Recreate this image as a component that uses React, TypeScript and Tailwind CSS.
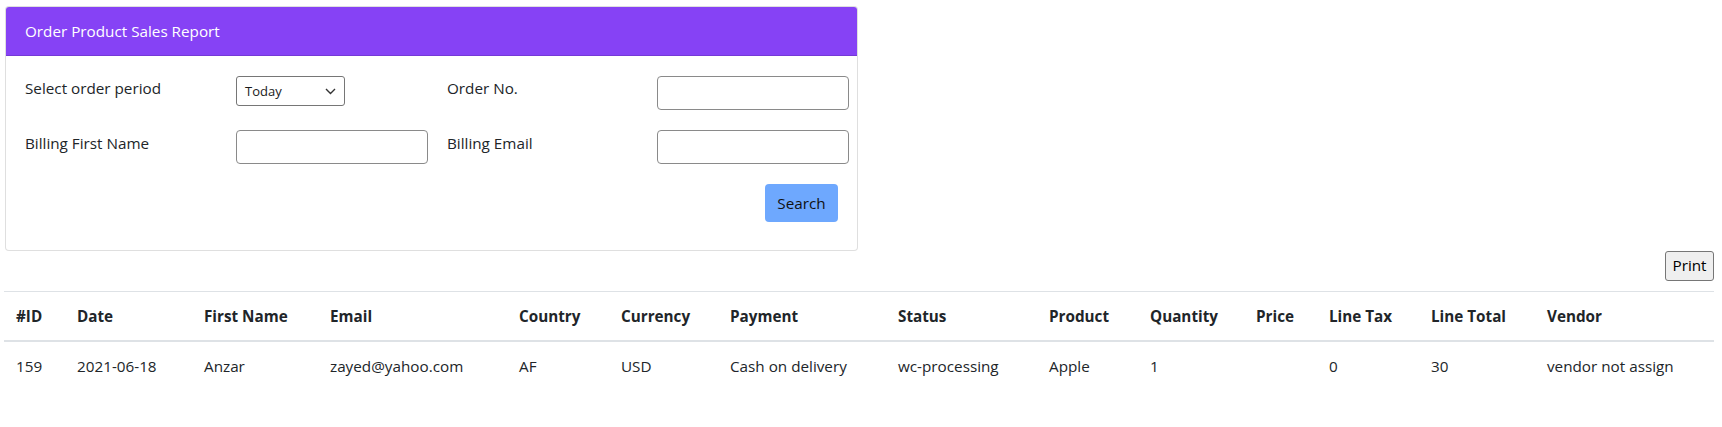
import React from "react";

const headers = [
  "#ID",
  "Date",
  "First Name",
  "Email",
  "Country",
  "Currency",
  "Payment",
  "Status",
  "Product",
  "Quantity",
  "Price",
  "Line Tax",
  "Line Total",
  "Vendor",
];

const row = [
  "159",
  "2021-06-18",
  "Anzar",
  "zayed@yahoo.com",
  "AF",
  "USD",
  "Cash on delivery",
  "wc-processing",
  "Apple",
  "1",
  "",
  "0",
  "30",
  "vendor not assign",
];

export default function App() {
  return (
    <div className="w-[1722px] h-[427px] overflow-hidden bg-white text-[#212529] font-['Open_Sans',sans-serif] text-[15.25px] leading-6">
      <div className="pt-[6px] pl-[5px]">
        <div className="w-[853px] border border-[rgba(0,0,0,0.125)] rounded-[4px] bg-white">
          <div className="h-[49px] bg-[#8642f5] text-white pl-[19px] pr-5 flex items-center rounded-t-[3px] border-b border-[rgba(0,0,0,0.125)]">
            Order Product Sales Report
          </div>
          <div className="pl-[19px] pr-5 pt-5 pb-[28px]">
            <div className="grid grid-cols-[211px_211px_210px_192px] items-start">
              <div>Select order period</div>
              <div className="w-[109px] h-[30px] border border-[#767676] rounded-[3px] flex items-center justify-between pl-[8px] pr-[8px] text-[13px] text-[#1a1a1a]">
                <span>Today</span>
                <svg width="11" height="7" viewBox="0 0 11 7" fill="none">
                  <path d="M1 1l4.5 4.5L10 1" stroke="#333" strokeWidth="1.4" />
                </svg>
              </div>
              <div>Order No.</div>
              <div className="w-[192px] h-[34px] border border-[#8a8a8a] rounded-[4px] bg-white" />
            </div>
            <div className="grid grid-cols-[211px_211px_210px_192px] items-start mt-5">
              <div className="pt-[1px]">Billing First Name</div>
              <div className="w-[192px] h-[34px] border border-[#8a8a8a] rounded-[4px] bg-white" />
              <div className="pt-[1px]">Billing Email</div>
              <div className="w-[192px] h-[34px] border border-[#8a8a8a] rounded-[4px] bg-white" />
            </div>
            <div className="flex justify-end mt-5 -mr-px">
              <button className="w-[73px] h-[38px] bg-[#6ea8fe] rounded-[4px] text-[#111] text-[15.25px]">
                Search
              </button>
            </div>
          </div>
        </div>
      </div>
      <div className="flex justify-end pr-[8px]">
        <button className="w-[49px] h-[30px] bg-[#efefef] border border-[#767676] rounded-[3px] text-[15.25px] text-black leading-none">
          Print
        </button>
      </div>
      <table className="table-fixed border-collapse w-[1710px] ml-[4px] mt-[10px]">
        <colgroup>
          <col className="w-[61px]" />
          <col className="w-[127px]" />
          <col className="w-[126px]" />
          <col className="w-[189px]" />
          <col className="w-[102px]" />
          <col className="w-[109px]" />
          <col className="w-[168px]" />
          <col className="w-[151px]" />
          <col className="w-[101px]" />
          <col className="w-[106px]" />
          <col className="w-[73px]" />
          <col className="w-[102px]" />
          <col className="w-[116px]" />
          <col className="w-[179px]" />
        </colgroup>
        <thead>
          <tr>
            {headers.map((h) => (
              <th
                key={h}
                className="text-left font-bold p-3 border-t border-[#dee2e6] border-b-2 border-b-[#dee2e6] whitespace-nowrap"
              >
                {h}
              </th>
            ))}
          </tr>
        </thead>
        <tbody>
          <tr>
            {row.map((c, i) => (
              <td key={i} className="text-left p-3 whitespace-nowrap">
                {c}
              </td>
            ))}
          </tr>
        </tbody>
      </table>
    </div>
  );
}
